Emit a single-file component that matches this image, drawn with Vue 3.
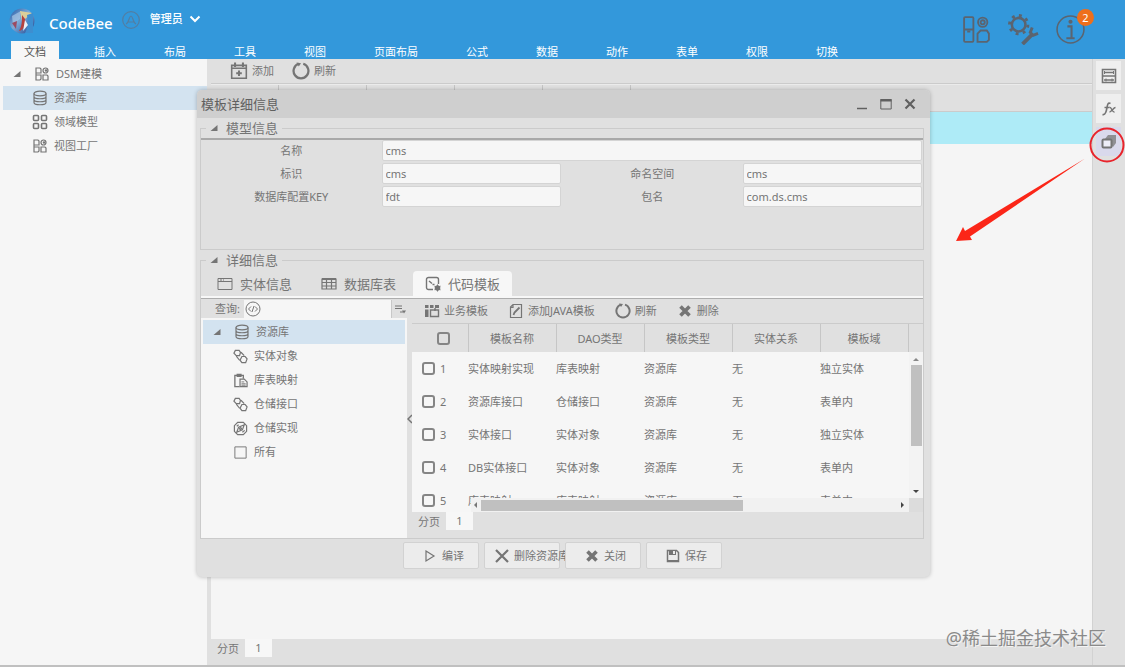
<script setup>
import { ref } from 'vue'

const menus = ['文档', '插入', '布局', '工具', '视图', '页面布局', '公式', '数据', '动作', '表单', '权限', '切换']
const activeMenu = ref('文档')

const modules = [
  { name: '资源库', icon: 'i-db' },
  { name: '领域模型', icon: 'i-grid' },
  { name: '视图工厂', icon: 'i-blocks' },
]
const activeModule = ref('资源库')

const tabs = [
  { name: '实体信息', icon: 'i-window' },
  { name: '数据库表', icon: 'i-table' },
  { name: '代码模板', icon: 'i-code' },
]
const activeTab = ref('代码模板')

const nodes = [
  { name: '实体对象', icon: 'i-link' },
  { name: '库表映射', icon: 'i-paste' },
  { name: '仓储接口', icon: 'i-link' },
  { name: '仓储实现', icon: 'i-compass' },
  { name: '所有', icon: 'i-square' },
]

const tools = [
  { name: '业务模板', icon: 'i-biz' },
  { name: '添加JAVA模板', icon: 'i-edit' },
  { name: '刷新', icon: 'i-refresh' },
  { name: '删除', icon: 'i-cross' },
]

const columns = ['模板名称', 'DAO类型', '模板类型', '实体关系', '模板域']
const rows = [
  ['实体映射实现', '库表映射', '资源库', '无', '独立实体'],
  ['资源库接口', '仓储接口', '资源库', '无', '表单内'],
  ['实体接口', '实体对象', '资源库', '无', '独立实体'],
  ['DB实体接口', '实体对象', '资源库', '无', '表单内'],
  ['库表映射', '库表映射', '资源库', '无', '表单内'],
]

const actions = [
  { name: '编译', icon: 'i-play' },
  { name: '删除资源库', icon: 'i-x' },
  { name: '关闭', icon: 'i-cross' },
  { name: '保存', icon: 'i-save' },
]

const form = ref({ name: 'cms', id: 'cms', space: 'cms', key: 'fdt', pkg: 'com.ds.cms' })
const query = ref('')
</script>

<template>
  <div class="app">
    <svg class="sprite" aria-hidden="true">
      <symbol id="i-blocks" viewBox="0 0 16 16"><g fill="none" stroke="currentColor" stroke-width="1.2"><path d="M2 2h4l1 1v4H2zM2 7v7h4l1-1V9H2M9 9h4l1 1v4H9z" /><circle cx="11.500" cy="4.500" r="2.500" /></g><circle cx="12" cy="4.500" r="1.200" fill="currentColor" /></symbol>
      <symbol id="i-db" viewBox="0 0 16 16"><g fill="none" stroke="currentColor" stroke-width="1.200"><ellipse cx="8" cy="3.500" rx="6" ry="2.300" /><path d="M2 3.500v9c0 3 12 3 12 0v-9M2 6.500c0 3 12 3 12 0M2 9.500c0 3 12 3 12 0" /></g></symbol>
      <symbol id="i-grid" viewBox="0 0 16 16"><g fill="none" stroke="currentColor" stroke-width="1.600"><rect x="1.500" y="1.500" width="5" height="5" rx="1" /><rect x="9.500" y="1.500" width="5" height="5" rx="1" /><rect x="1.500" y="9.500" width="5" height="5" rx="1" /><rect x="9.500" y="9.500" width="5" height="5" rx="1" /></g></symbol>
      <symbol id="i-window" viewBox="0 0 16 16"><path d="M1 2.500h14v11H1zM1 5.500h14M3 4h2M6 4h1" fill="none" stroke="currentColor" /></symbol>
      <symbol id="i-table" viewBox="0 0 16 16"><path d="M1 3h14v10H1zM1 6.500h14M1 10h14M5.500 3v10M10.500 3v10" fill="none" stroke="currentColor" stroke-width="1.200" /><path d="M1 2h14v2H1z" fill="currentColor" /></symbol>
      <symbol id="i-code" viewBox="0 0 16 16"><path d="M8 13.500H3.500a2 2 0 0 1-2-2v-8a2 2 0 0 1 2-2h8a2 2 0 0 1 2 2V8M4 5l3 2.500M7.500 8.500h2" fill="none" stroke="currentColor" stroke-width="1.400" /><circle cx="12.500" cy="12" r="2.800" fill="currentColor" /><path d="M12.500 8.500v7M9.500 10.300l6 3.500M9.500 13.700l6-3.500" stroke="currentColor" /></symbol>
      <symbol id="i-link" viewBox="0 0 16 16"><g fill="none" stroke="currentColor" stroke-width="1.300"><path d="M2.500 1.500h4l1.500 2-1 3.500H3.500L1 4.500zM9.500 8h3.500l2 2.500-1.500 4H9.500L7.500 12z" /><path d="M8.500 3.500L12 7M3.500 7.500L7 12" /></g></symbol>
      <symbol id="i-paste" viewBox="0 0 16 16"><path d="M7 14.500H2v-12h9V6M4.500 1.500h4v2h-4z" fill="none" stroke="currentColor" stroke-width="1.400" /><path d="M7.500 6.500H12l3 3v5H7.500z" fill="none" stroke="currentColor" stroke-width="1.300" /><path d="M9 9.500h3M9 11.500h4.500M9 13h4.500" stroke="currentColor" /></symbol>
      <symbol id="i-compass" viewBox="0 0 16 16"><g fill="none" stroke="currentColor" stroke-width="1.300"><path d="M5 1.500h6L14.500 5v6L11 14.500H5L1.500 11V5z" /><path d="M4 12l2-5.500L12 4l-2 5.500zM4 5.500L6 4M10 12l2.500-2" /><circle cx="8" cy="8" r="1" /></g></symbol>
      <symbol id="i-square" viewBox="0 0 16 16"><path d="M2 2h12v12H2z" fill="none" stroke="currentColor" /></symbol>
      <symbol id="i-biz" viewBox="0 0 16 16"><path d="M1 2h3.500v3H1zM6 2h3.500v3H6zM11 2h4v3h-4zM1 6.500h3.500V14H1z" fill="currentColor" /><path d="M6.500 7h8v6.500h-8zM11 5v3" fill="none" stroke="currentColor" stroke-width="1.400" /></symbol>
      <symbol id="i-edit" viewBox="0 0 16 16"><path d="M5 1.500h8.500v13h-11V4zM2.500 4.500H5v-3" fill="none" stroke="currentColor" stroke-width="1.200" /><path d="M5.500 12l1-2.500 5-5" stroke="currentColor" stroke-width="1.800" fill="none" /></symbol>
      <symbol id="i-refresh" viewBox="0 0 16 16"><path d="M6 1.600A6.600 6.600 0 1 0 10 1.600" fill="none" stroke="currentColor" stroke-width="2" /><path d="M4 .5l4 .5-2 3z" fill="currentColor" /></symbol>
      <symbol id="i-cross" viewBox="0 0 16 16"><path d="M3.500 3.500l9 9M12.500 3.500l-9 9" stroke="currentColor" stroke-width="3.600" /></symbol>
      <symbol id="i-x" viewBox="0 0 16 16"><path d="M2 2l12 12M14 2L2 14" stroke="currentColor" stroke-width="2.200" /></symbol>
      <symbol id="i-play" viewBox="0 0 16 16"><path d="M4 3l8 5-8 5z" fill="none" stroke="currentColor" stroke-width="1.200" /></symbol>
      <symbol id="i-save" viewBox="0 0 16 16"><path d="M2.500 2.500h9l2 2v9h-11z" fill="none" stroke="currentColor" stroke-width="1.500" /><path d="M4 2h7v5H4zM2 12h12v2H2z" fill="currentColor" /><path d="M8 3h2v3H8z" fill="#ececec" /></symbol>
      <symbol id="i-add" viewBox="0 0 16 16"><path d="M1.500 3h13v11.500h-13zM1.500 5.500h13" fill="none" stroke="currentColor" stroke-width="1.400" /><path d="M4.500 .5v4M11.500 .5v4M8 7.500v5M5.500 10h5" stroke="currentColor" stroke-width="1.800" /></symbol>
      <symbol id="i-tri" viewBox="0 0 16 16"><path d="M15 2v12H1z" fill="currentColor" /></symbol>
      <symbol id="i-code-round" viewBox="0 0 16 16"><g fill="none" stroke="currentColor"><circle cx="8" cy="8" r="7" /><path d="M6 5.500L3.500 8 6 10.500M10 5.500L12.500 8 10 10.500M9 5l-2 6" /></g></symbol>
      <symbol id="i-form" viewBox="0 0 16 16"><path d="M1.500 1.500h13v13h-13z" fill="none" stroke="currentColor" stroke-width="1.600" /><path d="M1 8h14M3.500 4.500h9M3 12h10" stroke="currentColor" stroke-width="1.600" /><path d="M3.500 3v3M12.500 3v3M5 10.500v3M11 10.500v3" stroke="currentColor" /></symbol>
      <symbol id="i-fx" viewBox="0 0 16 16"><path d="M9.500 2.500c-2.500-1.500-3 1-3.500 4S4.500 14.500 1.500 13.500M3.500 6.500h5" fill="none" stroke="currentColor" stroke-width="1.600" /><path d="M8.500 6.500c2-1 2.500 5 5 4.500M14.500 6.500c-2 0-4 4.500-6 4.500" fill="none" stroke="currentColor" stroke-width="1.400" /></symbol>
      <symbol id="i-stack" viewBox="0 0 16 16"><path d="M4 5l3-4h8v8l-3 4z" fill="currentColor" opacity=".75" /><rect x="1.500" y="5.500" width="9" height="8" rx="1" fill="#eeeef8" stroke="currentColor" stroke-width="2" /></symbol>
    </svg>

    <header class="header">
      <div class="brand-row">
        <svg class="logo" viewBox="0 0 26 26" aria-hidden="true">
          <defs><linearGradient id="globe" x1="0" y1="0" x2="1" y2="1"><stop offset="0" stop-color="#2559a5" /><stop offset=".45" stop-color="#7fabd8" /><stop offset="1" stop-color="#173d8a" /></linearGradient></defs>
          <circle cx="13" cy="13" r="12.500" fill="url(#globe)" />
          <path d="M3 8l9-5-1 8-7 6z" fill="#a9c6e6" opacity=".7" />
          <path d="M11 3l12 2-7 6-3 2z" fill="#dccf9a" />
          <path d="M18 7l6-2v20h-8c3-5 3-11 2-18z" fill="#3d8ed0" />
          <path d="M13 7l3 4c1 6-1 11-6 12 3-5 3-10 3-16z" fill="#b5423f" />
          <path d="M3 15l5-2-1 8z" fill="#9c4a62" />
          <path d="M16 12l3 5-5 6z" fill="#eaf1f7" />
        </svg>
        <h1 class="brand">CodeBee</h1>
        <svg class="avatar" viewBox="0 0 18 18" fill="none" stroke="currentColor" stroke-width="1.2" aria-hidden="true"><circle cx="9" cy="9" r="8.300" /><path d="M4 13c3-1 3-8 5-8s2 7 5 8M6 11h6" /></svg>
        <button class="user" type="button">管理员
          <svg viewBox="0 0 12 8" aria-hidden="true"><path d="M1.500 1.500L6 6l4.500-4.500" fill="none" stroke="currentColor" stroke-width="2" /></svg>
        </button>
        <div class="header-icons">
          <button type="button" aria-label="应用">
            <svg viewBox="0 0 30 30" fill="none" stroke="currentColor" stroke-width="1.8"><rect x="3" y="3" width="9" height="24" rx="1" /><path d="M3 15h9M6 17h3" /><circle cx="21" cy="8" r="4.500" /><circle cx="21" cy="8" r="2" /><path d="M16 19l3-3h6l2 3v6l-2 2h-9z" /></svg>
          </button>
          <button type="button" aria-label="设置">
            <svg viewBox="0 0 32 32" fill="none" stroke="currentColor"><circle cx="11" cy="11" r="7" stroke-width="2.600" /><circle cx="11" cy="11" r="9.500" stroke-width="3" stroke-dasharray="3 4.460" /><path d="M15 31l10-10" stroke-width="4" /><path d="M25 14l-2 5 3 3 5-2" stroke-width="3" /></svg>
          </button>
          <button type="button" aria-label="消息">
            <svg viewBox="0 0 30 30" fill="none" stroke="currentColor"><circle cx="15" cy="15" r="13" stroke-width="1.500" /><circle cx="15" cy="7.500" r="2" fill="currentColor" stroke="none" /><path d="M12 12h4v11M11 23.500h8" stroke-width="2" /></svg>
            <span class="badge">2</span>
          </button>
        </div>
      </div>
      <nav class="menu">
        <button v-for="m in menus" :key="m" type="button" :class="{ active: m === activeMenu }" @click="activeMenu = m">{{ m }}</button>
      </nav>
    </header>

    <div class="workspace">
      <aside class="sidebar">
        <div class="side-root"><svg class="tri"><use href="#i-tri" /></svg><svg class="ico"><use href="#i-blocks" /></svg>DSM建模</div>
        <button v-for="m in modules" :key="m.name" type="button" class="side-item" :class="{ active: m.name === activeModule }" @click="activeModule = m.name">
          <svg class="ico"><use :href="'#' + m.icon" /></svg>{{ m.name }}
        </button>
      </aside>

      <main class="main">
        <div class="toolbar main-tools">
          <button type="button"><svg class="ico-lg"><use href="#i-add" /></svg>添加</button>
          <button type="button"><svg class="ico-lg"><use href="#i-refresh" /></svg>刷新</button>
        </div>
        <div class="grid-head"><span v-for="n in 6" :key="n"></span></div>
        <div class="grid-row"></div>
        <div class="grid-space"></div>
        <div class="pager"><span>分页</span><button type="button">1</button></div>
      </main>

      <aside class="rail">
        <button type="button" aria-label="表单"><svg class="ico"><use href="#i-form" /></svg></button>
        <button type="button" aria-label="函数"><svg class="ico"><use href="#i-fx" /></svg></button>
        <button type="button" class="active" aria-label="窗口"><svg class="ico"><use href="#i-stack" /></svg></button>
      </aside>
    </div>

    <section class="dialog" role="dialog" aria-labelledby="dialog-title">
      <header class="dialog-head">
        <h2 id="dialog-title">模板详细信息</h2>
        <div class="dialog-ctrl">
          <button type="button" aria-label="最小化"><svg viewBox="0 0 12 12"><path d="M1 10.500h10" stroke="currentColor" stroke-width="1.500" /></svg></button>
          <button type="button" aria-label="最大化"><svg viewBox="0 0 12 12"><path d="M.8 1.500h10.400v9.500H.8z" fill="none" stroke="currentColor" stroke-width="1" /><path d="M.5 1h11v2.500H.5z" fill="currentColor" /></svg></button>
          <button type="button" aria-label="关闭窗口"><svg viewBox="0 0 12 12"><path d="M1.500 1.500l9 9M10.500 1.500l-9 9" stroke="currentColor" stroke-width="2.200" /></svg></button>
        </div>
      </header>

      <div class="dialog-body">
        <fieldset>
          <legend><svg class="tri"><use href="#i-tri" /></svg>模型信息</legend>
          <div class="form">
            <label for="f-name">名称</label><input id="f-name" v-model="form.name" class="wide" type="text" />
            <label for="f-id">标识</label><input id="f-id" v-model="form.id" type="text" />
            <label for="f-space">命名空间</label><input id="f-space" v-model="form.space" type="text" />
            <label for="f-key">数据库配置KEY</label><input id="f-key" v-model="form.key" type="text" />
            <label for="f-pkg">包名</label><input id="f-pkg" v-model="form.pkg" type="text" />
          </div>
        </fieldset>

        <fieldset>
          <legend><svg class="tri"><use href="#i-tri" /></svg>详细信息</legend>
          <div class="tabs" role="tablist">
            <button v-for="t in tabs" :key="t.name" type="button" role="tab" :aria-selected="t.name === activeTab" :class="{ active: t.name === activeTab }" @click="activeTab = t.name">
              <svg class="ico"><use :href="'#' + t.icon" /></svg>{{ t.name }}
            </button>
          </div>
          <div class="detail">
            <div class="tree-pane">
              <div class="search">
                <label for="q">查询:</label>
                <div class="search-box"><svg class="ico"><use href="#i-code-round" /></svg><input id="q" v-model="query" type="text" size="1" /></div>
                <button type="button" aria-label="筛选"><svg viewBox="0 0 12 12"><path d="M1 3h7M1 5.500h7M6 9h3" stroke="currentColor" /><path d="M8 7.500h4l-2 3z" fill="currentColor" /></svg></button>
              </div>
              <div class="tree">
                <button type="button" class="node root"><svg class="tri"><use href="#i-tri" /></svg><svg class="ico"><use href="#i-db" /></svg>资源库</button>
                <button v-for="n in nodes" :key="n.name" type="button" class="node"><svg class="ico-md"><use :href="'#' + n.icon" /></svg>{{ n.name }}</button>
              </div>
            </div>
            <div class="splitter"><svg viewBox="0 0 6 10"><path d="M5 1L1 5l4 4" fill="none" stroke="currentColor" stroke-width="1.500" /></svg></div>
            <div class="list-pane">
              <div class="toolbar list-tools">
                <button v-for="t in tools" :key="t.name" type="button"><svg class="ico"><use :href="'#' + t.icon" /></svg>{{ t.name }}</button>
              </div>
              <div class="table-wrap">
                <table>
                  <colgroup><col class="c-check" /><col v-for="c in columns" :key="c" /><col class="c-end" /></colgroup>
                  <thead>
                    <tr>
                      <th><input type="checkbox" aria-label="全选" /></th>
                      <th v-for="c in columns" :key="c">{{ c }}</th>
                      <th></th>
                    </tr>
                  </thead>
                  <tbody>
                    <tr v-for="(r, i) in rows" :key="i">
                      <td class="check"><label><input type="checkbox" />{{ i + 1 }}</label></td>
                      <td v-for="(c, j) in r" :key="j">{{ c }}</td>
                      <td></td>
                    </tr>
                  </tbody>
                </table>
                <div class="vbar"><i class="up"></i><b></b><i class="down"></i></div>
                <div class="hbar"><i class="left"></i><b></b><i class="right"></i></div>
                <div class="corner"></div>
              </div>
              <div class="pager"><span>分页</span><button type="button">1</button></div>
            </div>
          </div>
        </fieldset>
      </div>

      <footer class="dialog-foot">
        <button v-for="a in actions" :key="a.name" type="button"><svg class="ico"><use :href="'#' + a.icon" /></svg>{{ a.name }}</button>
      </footer>
    </section>

    <svg class="callout" viewBox="0 0 175 125" aria-hidden="true">
      <circle cx="157" cy="25" r="16.500" fill="none" stroke="#e8242c" stroke-width="2" />
      <path d="M135 38.500L20 116.500l2 3.500-16 1 7-14 2 4z" fill="#fb2618" />
    </svg>
    <div class="watermark">@稀土掘金技术社区</div>
  </div>
</template>

<style>
body {
  margin: 0;
}
</style>

<style scoped>
.app {
  position: relative;
  display: flex;
  flex-direction: column;
  min-height: 100vh;
  overflow: hidden;
  background: #e0e0e0;
  color: #757575;
  font: 11px/16px "Noto Sans", "Noto Sans CJK SC", sans-serif;
}
.app * {
  box-sizing: border-box;
}
button,
input {
  margin: 0;
  padding: 0;
  border: 0;
  background: none;
  color: inherit;
  font: inherit;
}
button {
  display: flex;
  align-items: center;
  white-space: nowrap;
}
svg {
  flex: none;
}
.sprite {
  position: absolute;
  width: 0;
  height: 0;
}
.ico {
  width: 16px;
  height: 16px;
}
.ico-md {
  width: 15px;
  height: 15px;
}
.ico-lg {
  width: 18px;
  height: 18px;
}
.tri {
  width: 8px;
  height: 8px;
}

/* header */
.header {
  background: #3398db;
  color: #fff;
}
.brand-row {
  display: flex;
  align-items: center;
  height: 41px;
  padding: 0 30px 0 9px;
}
.logo {
  width: 26px;
  height: 26px;
  margin-right: 14px;
}
.brand {
  margin: 4px 9px 0 0;
  font-size: 15px;
  line-height: 24px;
  font-weight: 500;
}
.avatar {
  width: 18px;
  height: 18px;
  margin: 0 10px 2px 0;
  color: #527ea3;
}
.user {
  gap: 6px;
  margin-bottom: 4px;
  font-weight: 500;
}
.user svg {
  width: 12px;
  height: 8px;
}
.header-icons {
  display: flex;
  gap: 16px;
  margin: 18px 9px 0 auto;
  color: #5b6470;
}
.header-icons button {
  position: relative;
}
.header-icons svg {
  width: 31px;
  height: 31px;
}
.badge {
  position: absolute;
  top: -5px;
  right: -8px;
  width: 17px;
  height: 17px;
  border-radius: 50%;
  background: #ee6f1c;
  color: #fff;
  text-align: center;
  line-height: 17px;
}
.menu {
  display: flex;
  gap: 22px;
  padding-left: 11px;
}
.menu button {
  height: 18px;
  padding: 3px 13px 0;
}
.menu .active {
  background: #f7f7f7;
  color: #555;
}

/* workspace */
.workspace {
  flex: 1;
  display: flex;
  border-bottom: 2px solid #c0c0c0;
}
.sidebar {
  width: 207px;
  padding: 3px 0 0 3px;
  background: #f6f6f6;
}
.side-root,
.side-item {
  display: flex;
  align-items: center;
  width: 100%;
  height: 24px;
  gap: 6px;
}
.side-root {
  padding-left: 10px;
}
.side-root .tri {
  margin-right: 7px;
}
.side-item {
  padding-left: 29px;
}
.side-item.active {
  background: #d3e3f0;
}
.main {
  flex: 1;
  display: flex;
  flex-direction: column;
  margin-left: 4px;
}
.toolbar {
  display: flex;
  align-items: center;
  height: 25px;
  border-bottom: 1px solid #cbcbcb;
}
.toolbar button {
  gap: 4px;
}
.main-tools {
  gap: 18px;
  padding-left: 19px;
}
.grid-head {
  display: flex;
  height: 28px;
  border-top: 1px solid #ebebeb;
  border-bottom: 1px solid #cbcbcb;
}
.grid-head span {
  width: 88px;
  border-right: 1px solid #c4c4c4;
}
.grid-head span:first-child {
  width: 68px;
}
.grid-head span:last-child {
  border: 0;
}
.grid-row {
  height: 32px;
  background: #aeebf7;
}
.grid-space {
  flex: 1;
  background: #f5f5f5;
}
.pager {
  display: flex;
  height: 26px;
  padding-left: 6px;
  gap: 6px;
  line-height: 20px;
}
.pager button {
  justify-content: center;
  width: 27px;
  height: 18px;
  background: #f7f7f7;
}
.rail {
  display: flex;
  flex-direction: column;
  gap: 4px;
  width: 33px;
  padding: 2px 4px 0 3px;
  border-left: 1px solid #d2d2d2;
}
.rail button {
  justify-content: center;
  height: 29px;
  background: #efefef;
}
.rail .active {
  background: #d9d9ec;
}

/* dialog */
.dialog {
  position: absolute;
  top: 90px;
  left: 197px;
  right: 195px;
  border-radius: 5px;
  background: #e0e0e0;
  box-shadow: 0 0 4px rgba(0, 0, 0, 0.25);
}
.dialog-head {
  display: flex;
  align-items: center;
  justify-content: space-between;
  height: 28px;
  padding: 0 14px 0 4px;
  border-radius: 5px 5px 0 0;
  background: #cfcfcf;
  color: #606060;
}
.dialog-head h2 {
  margin: 0;
  font-size: 13px;
  font-weight: 400;
  line-height: 20px;
}
.dialog-ctrl {
  display: flex;
  gap: 12px;
}
.dialog-ctrl svg {
  width: 12px;
  height: 12px;
}
.dialog-body {
  padding: 0 6px 0 3px;
}
fieldset {
  min-width: 0;
  margin: 0;
  padding: 0;
  border: 1px solid #cbcbcb;
}
legend {
  display: flex;
  align-items: center;
  gap: 8px;
  height: 20px;
  margin-left: 5px;
  padding: 0 4px;
  font-size: 13px;
}
.form {
  display: grid;
  grid-template-columns: repeat(4, 1fr);
  grid-auto-rows: 21px;
  gap: 2px 0;
  align-content: start;
  height: 111px;
  border-top: 2px solid #a9a9a9;
}
.form label {
  text-align: center;
  line-height: 22px;
}
.form input {
  min-width: 0;
  margin-right: 1px;
  padding: 0 3px;
  border: 1px solid #d4d4d4;
  border-radius: 2px;
  background: #f6f6f6;
}
.form .wide {
  grid-column: span 3;
}
.tabs {
  display: flex;
  align-items: flex-end;
  height: 28px;
  padding-left: 4px;
  border-bottom: 2px solid #f7f7f7;
}
.tabs button {
  gap: 7px;
  height: 25px;
  margin-right: 5px;
  padding: 0 12px;
  font-size: 13px;
}
.tabs .active {
  border-radius: 4px 4px 0 0;
  background: #f7f7f7;
}
.detail {
  display: flex;
  border-top: 1px solid #adadad;
}
.tree-pane {
  display: flex;
  flex-direction: column;
  flex: none;
  width: 206px;
}
.search {
  display: flex;
  align-items: center;
  height: 19px;
  padding-left: 14px;
}
.search label {
  white-space: nowrap;
}
.search-box {
  flex: 1;
  display: flex;
  align-items: center;
  height: 18px;
  margin-left: 4px;
  padding-left: 1px;
  background: #f6f6f6;
}
.search-box input {
  flex: 1;
  min-width: 0;
}
.search button {
  justify-content: center;
  width: 16px;
  height: 18px;
  border-left: 1px solid #c8c8c8;
}
.search button svg {
  width: 12px;
  height: 12px;
}
.tree {
  flex: 1;
  padding: 2px 2px 0;
  background: #f6f6f6;
}
.node {
  width: 100%;
  height: 24px;
  gap: 6px;
  padding-left: 30px;
}
.node.root {
  padding-left: 10px;
  background: #d3e3f0;
}
.node.root .tri {
  margin-right: 7px;
}
.splitter {
  display: flex;
  align-items: center;
  width: 5px;
}
.splitter svg {
  width: 6px;
  height: 10px;
}
.list-pane {
  flex: 1;
  min-width: 0;
}
.list-tools {
  gap: 20px;
  padding-left: 12px;
}
.table-wrap {
  position: relative;
  height: 188px;
  overflow: hidden;
}
table {
  width: 100%;
  table-layout: fixed;
  border-collapse: collapse;
  background: #f6f6f6;
}
.c-check {
  width: 56px;
}
.c-end {
  width: 15px;
}
th {
  height: 28px;
  padding: 1px 0 0;
  border-left: 1px solid #c6c6c6;
  background: #e0e0e0;
  font-weight: 400;
}
th:first-child {
  border-left: 0;
  padding-left: 8px;
}
td {
  height: 33px;
  padding: 0;
}
input[type="checkbox"] {
  appearance: none;
  display: block;
  width: 13px;
  height: 13px;
  border: 2px solid #858585;
  border-radius: 3px;
}
th input[type="checkbox"] {
  margin: 0 auto;
}
.check label {
  display: flex;
  align-items: center;
  gap: 5px;
  padding-left: 10px;
}
.vbar,
.hbar,
.corner {
  position: absolute;
}
.vbar {
  top: 28px;
  right: 0;
  bottom: 14px;
  display: flex;
  flex-direction: column;
  align-items: center;
  width: 14px;
  padding: 6px 0 5px;
  background: #f3f3f3;
}
.vbar b {
  flex: none;
  width: 11px;
  height: 60%;
  margin: 4px 0 auto;
  background: #c0c0c0;
}
.hbar {
  left: 59px;
  right: 14px;
  bottom: 0;
  display: flex;
  align-items: center;
  height: 14px;
  padding: 0 5px 0 3px;
  background: #f1f1f1;
}
.hbar b {
  width: 61%;
  height: 11px;
  margin: 0 auto 0 4px;
  background: #c0c0c0;
}
.corner {
  right: 0;
  bottom: 0;
  width: 14px;
  height: 14px;
  background: #dcdcdc;
}
.vbar i,
.hbar i {
  border: 3px solid transparent;
}
.up {
  border-top: 0 !important;
  border-bottom-color: #888 !important;
}
.down {
  border-bottom: 0 !important;
  border-top-color: #444 !important;
}
.left {
  border-left: 0 !important;
  border-right-color: #777 !important;
}
.right {
  border-right: 0 !important;
  border-left-color: #444 !important;
}
.dialog-foot {
  display: flex;
  justify-content: center;
  gap: 5px;
  padding: 3px 2px 8px 0;
}
.dialog-foot button {
  position: relative;
  width: 76px;
  height: 27px;
  gap: 4px;
  padding-left: 18px;
  border: 1px solid #d2d2d2;
  border-radius: 2px;
  background: #ececec;
}
.dialog-foot button:nth-child(2) {
  padding-left: 9px;
}

/* overlays */
.callout {
  position: absolute;
  top: 120px;
  right: 0;
  width: 175px;
  height: 125px;
  pointer-events: none;
}
.watermark {
  position: absolute;
  right: 19px;
  bottom: 16px;
  color: #8a8a8a;
  font-size: 18px;
  line-height: 26px;
  text-shadow: 1px 1px 0 #f4f4f4;
}
</style>
